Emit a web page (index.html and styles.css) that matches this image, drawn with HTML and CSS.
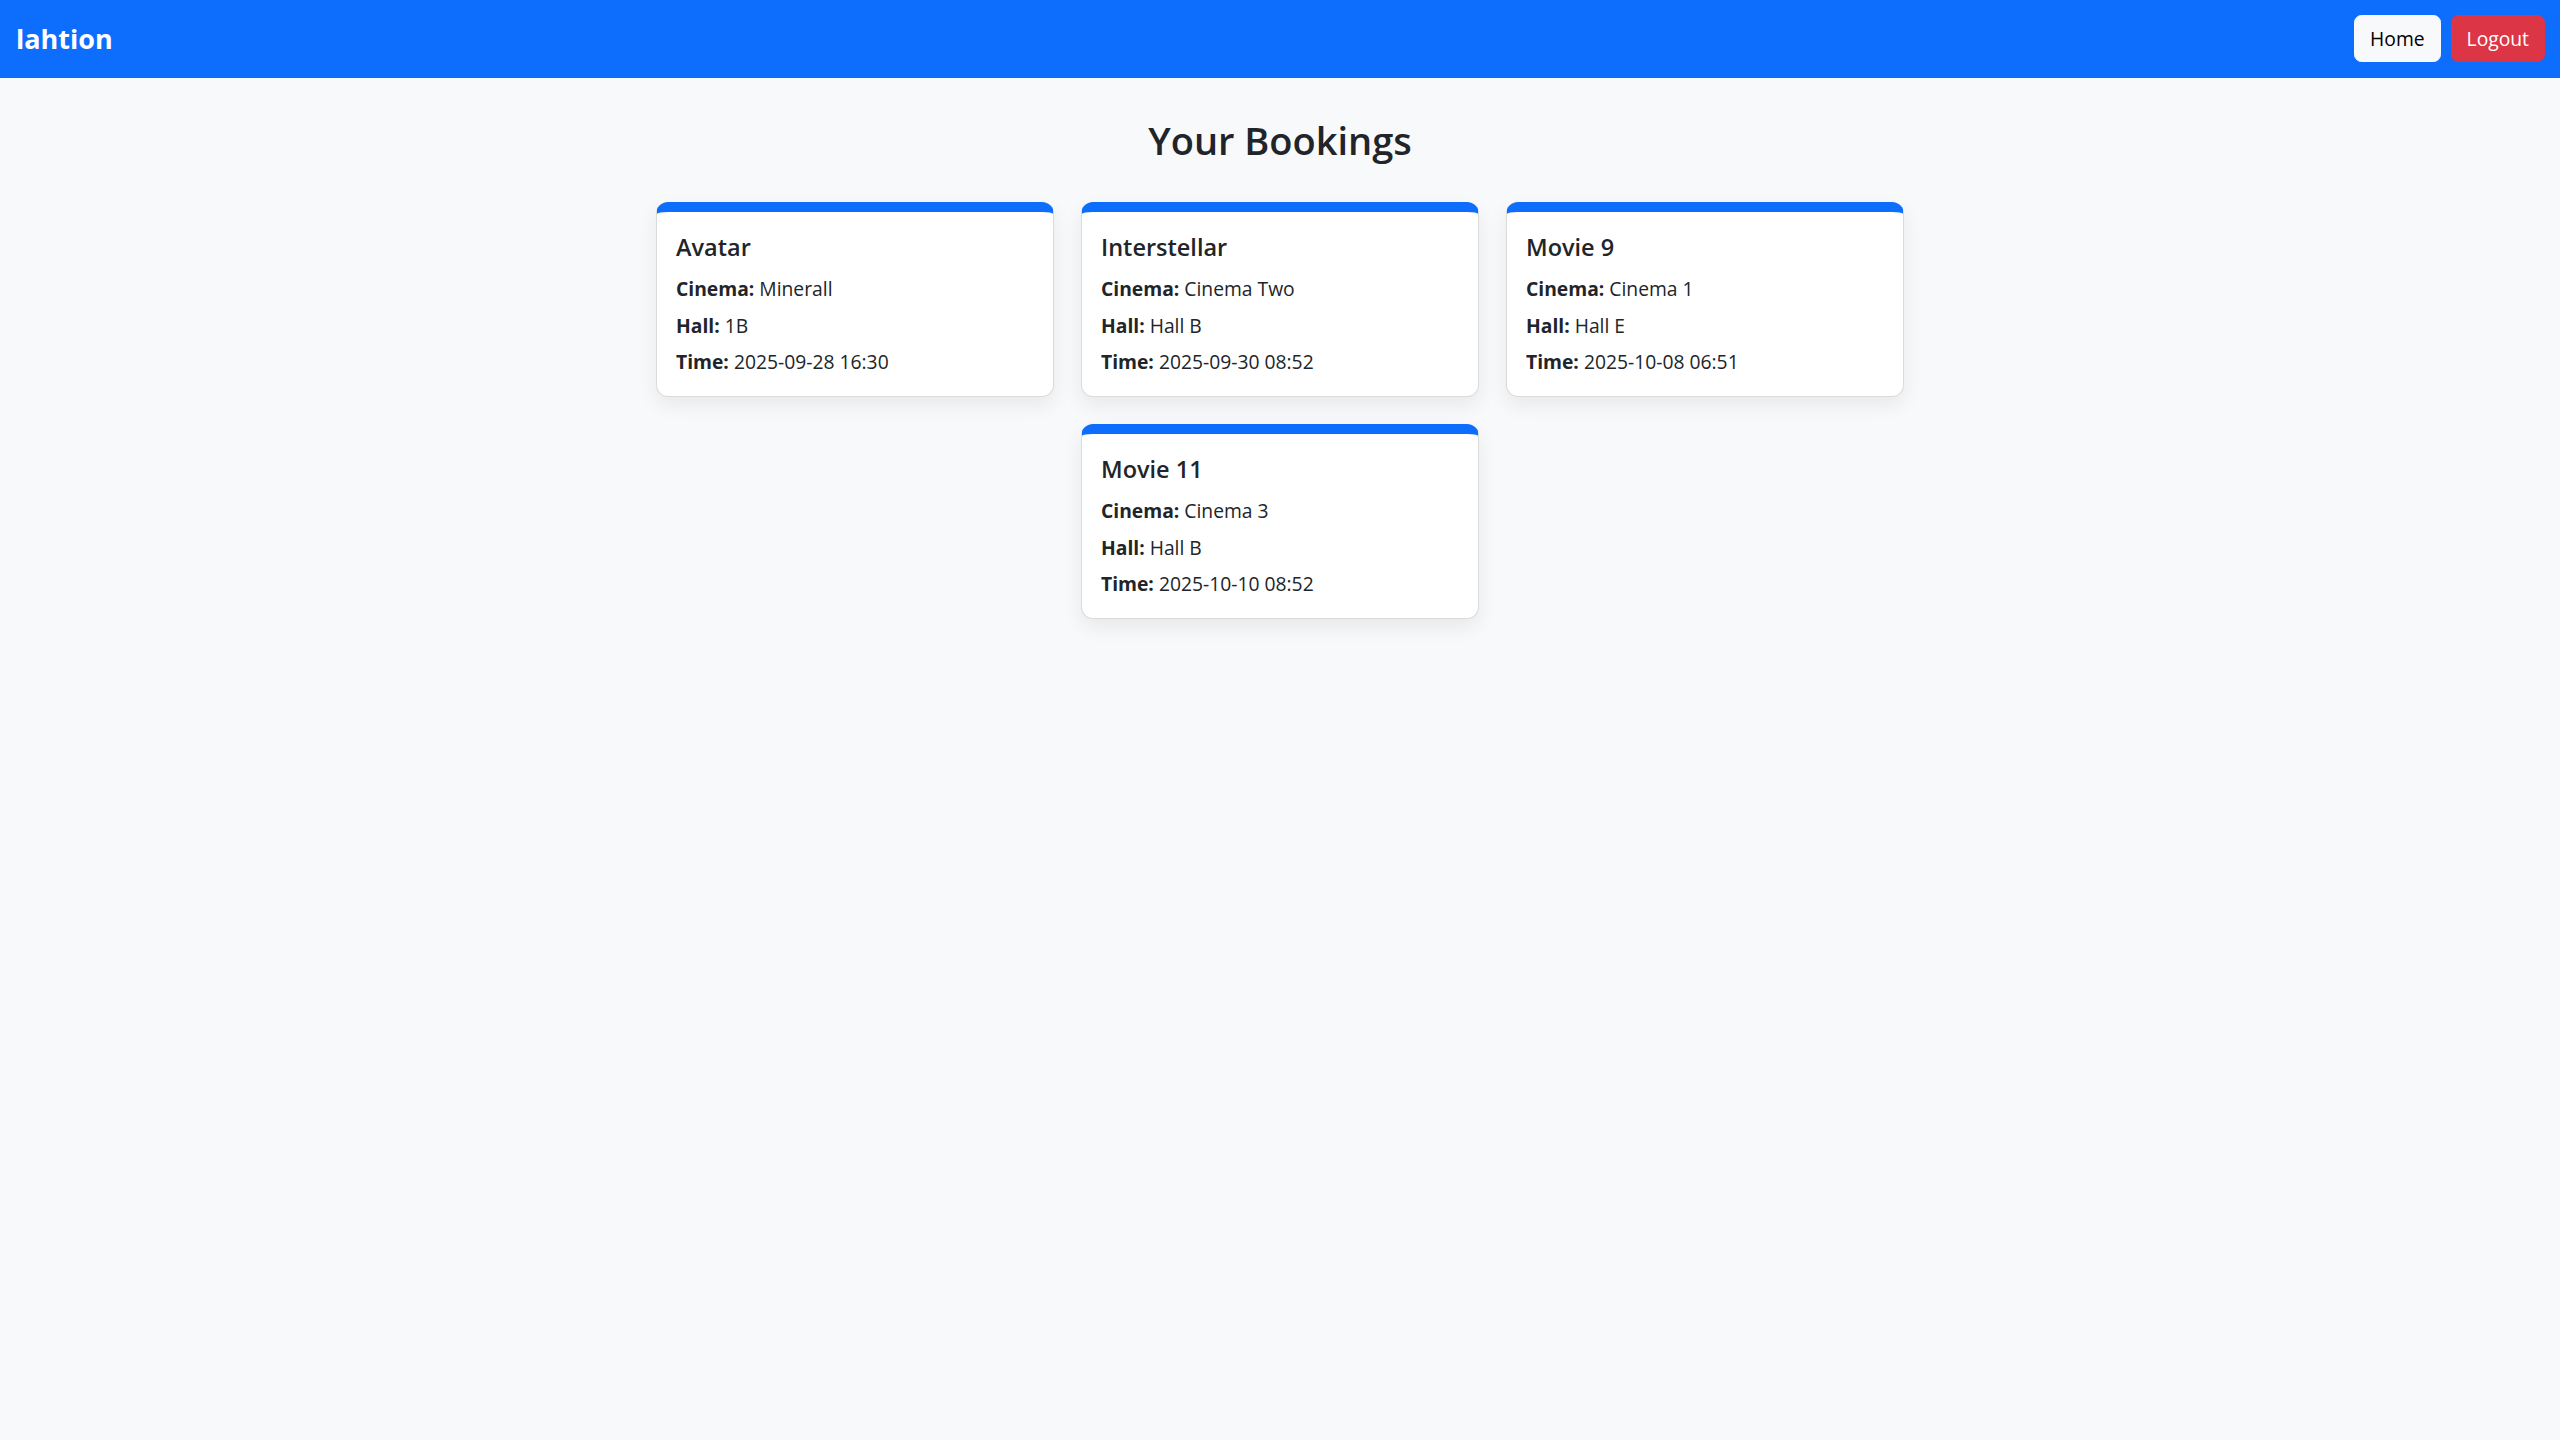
FILE: index.html
```html
<!DOCTYPE html>
<html lang="en">
<head>
<meta charset="utf-8">
<title>Your Bookings</title>
<link rel="stylesheet" href="styles.css">
</head>
<body>
<nav class="navbar">
  <a class="brand" href="#">lahtion</a>
  <div class="nav-actions">
    <a class="btn btn-light" href="#">Home</a>
    <a class="btn btn-danger" href="#">Logout</a>
  </div>
</nav>
<main class="main">
  <h2 class="page-title">Your Bookings</h2>
  <div class="cards">
    <div class="card">
      <div class="card-body">
        <h5 class="card-title">Avatar</h5>
        <p class="line"><strong>Cinema:</strong> Minerall</p>
        <p class="line"><strong>Hall:</strong> 1B</p>
        <p class="line"><strong>Time:</strong> 2025-09-28 16:30</p>
      </div>
    </div>
    <div class="card">
      <div class="card-body">
        <h5 class="card-title">Interstellar</h5>
        <p class="line"><strong>Cinema:</strong> Cinema Two</p>
        <p class="line"><strong>Hall:</strong> Hall B</p>
        <p class="line"><strong>Time:</strong> 2025-09-30 08:52</p>
      </div>
    </div>
    <div class="card">
      <div class="card-body">
        <h5 class="card-title">Movie 9</h5>
        <p class="line"><strong>Cinema:</strong> Cinema 1</p>
        <p class="line"><strong>Hall:</strong> Hall E</p>
        <p class="line"><strong>Time:</strong> 2025-10-08 06:51</p>
      </div>
    </div>
    <div class="card">
      <div class="card-body">
        <h5 class="card-title">Movie 11</h5>
        <p class="line"><strong>Cinema:</strong> Cinema 3</p>
        <p class="line"><strong>Hall:</strong> Hall B</p>
        <p class="line"><strong>Time:</strong> 2025-10-10 08:52</p>
      </div>
    </div>
  </div>
</main>
</body>
</html>
```
FILE: styles.css
```css
* { box-sizing: border-box; }
html, body { margin: 0; padding: 0; }
body {
  background: #f8f9fa;
  color: #212529;
  font-family: "Open Sans", "Noto Sans", "Liberation Sans", sans-serif;
  font-size: 19.3px;
  line-height: 30px;
  min-height: 1440px;
}
.navbar {
  background: #0d6efd;
  display: flex;
  align-items: center;
  justify-content: space-between;
  padding: 15px 15px 15.5px 16px;
}
.brand {
  color: #fff;
  text-decoration: none;
  font-weight: 700;
  font-size: 27px;
  line-height: 36px;
}
.nav-actions {
  display: flex;
  gap: 10px;
}
.btn {
  display: inline-block;
  height: 47px;
  padding: 7.5px 15px;
  border: 1px solid transparent;
  border-radius: 7.5px;
  font-size: 19.3px;
  line-height: 30px;
  text-decoration: none;
}
.btn-light { background: #f8f9fa; color: #000; border-color: #f8f9fa; }
.btn-danger { background: #dc3545; color: #fff; border-color: #dc3545; }
.main {
  padding-top: 38px;
}
.page-title {
  margin: 0 0 38px;
  text-align: center;
  font-size: 38px;
  line-height: 48px;
  font-weight: 600;
}
.cards {
  width: 1248px;
  margin: 0 auto;
  display: flex;
  flex-wrap: wrap;
  justify-content: center;
  gap: 27px;
}
.card {
  width: 398px;
  background: #fff;
  border: 1px solid rgba(0,0,0,.14);
  border-top: 10px solid #0d6efd;
  border-radius: 12px;
  box-shadow: 0 8px 20px rgba(0,0,0,.07);
}
.card-body {
  padding: 20px 19px 18.5px;
}
.card-title {
  margin: 0 0 12.5px;
  font-size: 23.5px;
  line-height: 30px;
  font-weight: 600;
}
.line {
  margin: 0 0 6.5px;
}
.line:last-child { margin-bottom: 0; }
.line strong { font-weight: 700; }
```
